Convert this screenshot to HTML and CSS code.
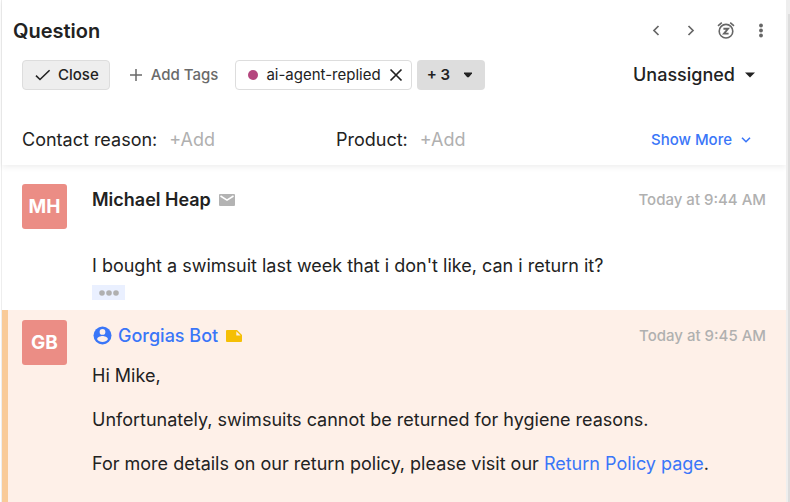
FILE: index.html
```html
<!DOCTYPE html>
<html lang="en">
<head>
<meta charset="utf-8">
<title>Question</title>
<link rel="stylesheet" href="styles.css">
</head>
<body>
<main class="ticket">
  <header class="header">
    <div class="title-row">
      <h1 class="title">Question</h1>
      <nav class="actions" aria-label="Ticket actions">
        <button class="icon-button" aria-label="Previous ticket"><svg width="20" height="20" viewBox="0 0 20 20"><path d="M12.500 5 8 9.500l4.500 4.500" fill="none" stroke="currentColor" stroke-width="1.7"/></svg></button>
        <button class="icon-button" aria-label="Next ticket"><svg width="20" height="20" viewBox="0 0 20 20"><path d="M7.500 5 12 9.500 7.500 14" fill="none" stroke="currentColor" stroke-width="1.7"/></svg></button>
        <button class="icon-button" aria-label="Snooze"><svg width="20" height="20" viewBox="0 0 20 20" fill="none" stroke="currentColor"><circle cx="10" cy="10.2" r="6.800" stroke-width="1.6"/><path d="M2 4.800l3.800-3.200M18 4.800l-3.800-3.200" stroke-width="1.600"/><path d="M7.400 7.800h4.600l-4 4.800h4.600" stroke-width="1.900"/></svg></button>
        <button class="icon-button" aria-label="More actions"><svg width="20" height="20" viewBox="0 0 20 20" fill="currentColor"><circle cx="10" cy="4.500" r="1.900"/><circle cx="10" cy="9.500" r="1.900"/><circle cx="10" cy="14.500" r="1.900"/></svg></button>
      </nav>
    </div>
    <div class="tag-row">
      <button class="button close-button"><svg width="18" height="18" viewBox="0 0 18 18"><path d="M2 9.600l4 3.900L15.600 4.200" fill="none" stroke="currentColor" stroke-width="1.6"/></svg>Close</button>
      <button class="button add-tags"><svg width="14" height="14" viewBox="0 0 14 14"><path d="M7 1v12M1 7h12" stroke="currentColor" stroke-width="1.5"/></svg>Add Tags</button>
      <span class="tag"><span class="dot"></span>ai-agent-replied<button class="remove" aria-label="Remove tag"><svg width="14" height="14" viewBox="0 0 14 14"><path d="M1.500 1.500l11 11M12.500 1.500l-11 11" stroke="currentColor" stroke-width="1.7"/></svg></button></span>
      <button class="button more-tags">+ 3<svg width="10" height="6" viewBox="0 0 10 6"><path d="M1 .5h8v1L5.800 5.300H4.200L1 1.500z" fill="currentColor"/></svg></button>
      <button class="assignee">Unassigned<svg width="10" height="6" viewBox="0 0 10 6"><path d="M0 .5h10L5 5.500z" fill="currentColor"/></svg></button>
    </div>
    <div class="field-row">
      <div class="field"><span>Contact reason:</span><button class="add">+Add</button></div>
      <div class="field"><span>Product:</span><button class="add">+Add</button></div>
      <button class="show-more">Show More<svg width="10" height="8" viewBox="0 0 10 8"><path d="M1 1.700l4 4 4-4" fill="none" stroke="currentColor" stroke-width="1.6"/></svg></button>
    </div>
  </header>
  <article class="message">
    <div class="avatar">MH</div>
    <div class="content">
      <div class="meta">
        <span class="author">Michael Heap</span>
        <svg class="channel" width="16" height="12" viewBox="0 0 16 12"><rect width="16" height="12" rx="1" fill="#b3b3b3"/><path d="M1.500 2L8 6.200 14.500 2" fill="none" stroke="#fff" stroke-width="1.500"/></svg>
        <time class="time">Today at 9:44 AM</time>
      </div>
      <p class="text first-text">I bought a swimsuit last week that i don't like, can i return it?</p>
      <button class="ellipsis" aria-label="Show quoted text"><svg width="20" height="6" viewBox="0 0 20 6" fill="#b0b0b0"><circle cx="3" cy="3" r="2.800"/><circle cx="10" cy="3" r="2.800"/><circle cx="17" cy="3" r="2.800"/></svg></button>
    </div>
  </article>
  <article class="message note">
    <div class="avatar">GB</div>
    <div class="content">
      <div class="meta">
        <svg class="person" width="20" height="20" viewBox="0 0 20 20"><circle cx="10.500" cy="9.500" r="9" fill="#3a76f8"/><circle cx="10.500" cy="5.900" r="2.900" fill="#fef0e8"/><path d="M5.100 13.200c0-2 3.600-3.200 5.400-3.200s5.400 1.200 5.400 3.200c-1.100 1.700-3.200 2.700-5.400 2.700s-4.300-1-5.400-2.700z" fill="#fef0e8"/></svg>
        <span class="author agent">Gorgias Bot</span>
        <svg class="channel" width="16" height="12" viewBox="0 0 16 12"><path d="M1 0h10l5 5v6a1 1 0 0 1-1 1H1a1 1 0 0 1-1-1V1a1 1 0 0 1 1-1z" fill="#f5bf05"/><path d="M10.300 1.200v4.200h4.300z" fill="#fef0e8"/></svg>
        <time class="time">Today at 9:45 AM</time>
      </div>
      <p class="text">Hi Mike,</p>
      <p class="text">Unfortunately, swimsuits cannot be returned for hygiene reasons.</p>
      <p class="text">For more details on our return policy, please visit our <a href="#">Return Policy page</a>.</p>
    </div>
  </article>
</main>
<div class="rail"><div class="rail-line"></div></div>
</body>
</html>
```
FILE: styles.css
```css
* { box-sizing: border-box; }
body {
  margin: 0;
  display: flex;
  min-height: 100vh;
  font-family: Inter, "Liberation Sans", sans-serif;
  font-size: 18px;
  line-height: 24px;
  color: #222;
  background: #fff;
}
button {
  font: inherit;
  color: inherit;
  padding: 0;
  border: 0;
  background: none;
}
svg { display: block; flex: none; }
.ticket {
  flex: 1;
  display: flex;
  flex-direction: column;
  min-width: 0;
  margin-left: 1px;
  border-left: 1px solid #eee;
}
.rail {
  width: 4px;
  padding: 14px 0 0 2px;
  background: #eee;
  display: flex;
}
.rail-line { flex: 1; background: #ddd; }
.header {
  padding: 18px 20px 13px 20px;
  box-shadow: 0 2px 6px rgba(0, 0, 0, 0.07);
}
.title-row, .tag-row, .field-row, .field, .actions, .button, .tag, .assignee, .show-more, .meta {
  display: flex;
  align-items: center;
}
.title-row { justify-content: space-between; }
.title {
  margin: 0 0 0 -9px;
  font-size: 20px;
  line-height: 26px;
  font-weight: 600;
}
.actions { gap: 15px; margin-right: -5px; color: #666; }
.tag-row { margin-top: 16px; font-size: 15px; }
.button, .tag {
  height: 30px;
  border-radius: 4px;
  font-weight: 500;
}
.close-button {
  padding: 0 10px 0 11px;
  gap: 6px;
  border: 1px solid #ddd;
  background: #eee;
}
.add-tags { gap: 8px; margin-left: 19px; color: #6a6a6a; }
.tag {
  margin-left: 17px;
  padding: 0 8px 0 12px;
  border: 1px solid #ddd;
  font-weight: 400;
}
.dot {
  width: 10px;
  height: 10px;
  margin-right: 8px;
  border-radius: 50%;
  background: #b5467e;
}
.remove { margin-left: 8px; }
.more-tags {
  margin-left: 5px;
  padding: 0 12px 0 10px;
  gap: 13px;
  background: #ddd;
  font-weight: 600;
}
.assignee {
  gap: 10px;
  margin: 0 11px 0 auto;
  font-size: 18px;
  font-weight: 500;
}
.field-row { margin-top: 38px; }
.field { flex: 0 0 314px; gap: 12px; }
.add { color: #b0b0b0; }
.show-more {
  gap: 9px;
  margin: 0 15px 0 auto;
  font-size: 15px;
  font-weight: 500;
  color: #3a76f8;
}
.message {
  display: flex;
  gap: 25px;
  padding: 19px 20px 10px;
}
.avatar {
  flex: none;
  width: 45px;
  height: 45px;
  border-radius: 3px;
  background: #eb8d85;
  color: #fff;
  font-size: 19px;
  font-weight: 700;
  line-height: 46px;
  text-align: center;
}
.content { flex: 1; min-width: 0; }
.meta { height: 32px; }
.author { font-weight: 600; }
.agent { font-weight: 500; color: #3a76f8; }
.channel { margin-left: 8px; }
.person { margin-right: 6px; }
.time {
  margin-left: auto;
  font-size: 15px;
  font-weight: 500;
  color: #b0b0b0;
}
.text { margin: 0 0 20px; }
.first-text { margin: 38px 0 7px; }
.ellipsis {
  display: flex;
  align-items: center;
  justify-content: center;
  width: 33px;
  height: 15px;
  background: #eaf0ff;
}
.note {
  flex: 1;
  padding: 10px 20px 10px 14px;
  border-left: 6px solid #f9cb99;
  background: #fef0e8;
}
.note .meta { margin-bottom: 12px; }
a { color: #3a76f8; text-decoration: none; }
```
